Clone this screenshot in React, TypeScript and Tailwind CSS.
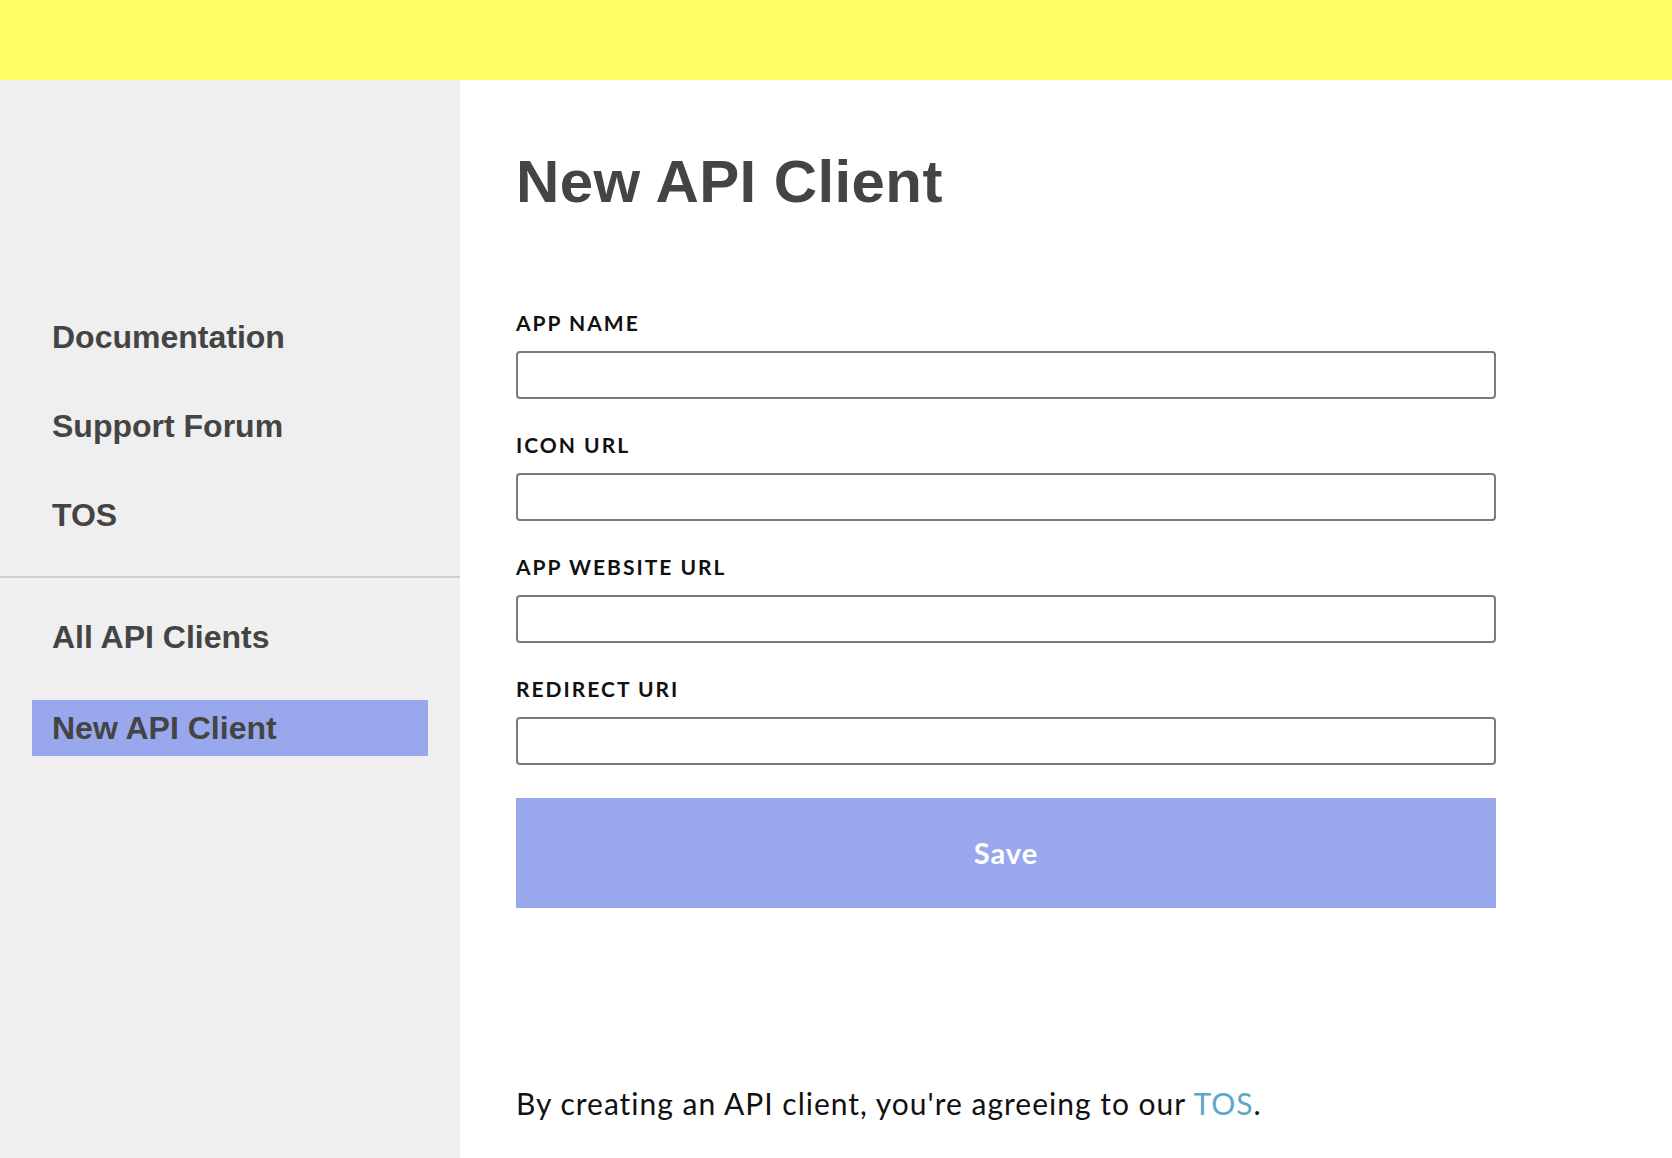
import { ReactNode } from 'react';

const sideItem = 'block px-5 text-[32px] leading-[40px] font-bold text-[#444]';

function Field({ label, last }: { label: string; last?: boolean }) {
  return (
    <div className={last ? '' : 'mb-[34px]'}>
      <label className="block text-[21px] leading-[24px] font-bold tracking-[2px] text-[#111] mb-4">{label}</label>
      <input type="text" className="block w-full h-[48px] border-2 border-[#7a7a7a] rounded-[4px] bg-white px-3 outline-none" />
    </div>
  );
}

function NavLink({ children, active }: { children: ReactNode; active?: boolean }) {
  return (
    <a href="#" className={active ? `${sideItem} py-2 bg-[#99a8ed]` : sideItem}>
      {children}
    </a>
  );
}

export default function App() {
  return (
    <div className="flex flex-col h-screen overflow-hidden bg-white" style={{ fontFamily: 'Lato, "Open Sans", sans-serif' }}>
      <header className="h-[80px] shrink-0 bg-[#ffff66]" />
      <div className="flex flex-1">
        <aside className="w-[460px] shrink-0 bg-[#efefef] pt-[237px] font-['Liberation_Sans',Arial,sans-serif]">
          <nav className="mx-8 flex flex-col gap-[49px]">
            <NavLink>Documentation</NavLink>
            <NavLink>Support Forum</NavLink>
            <NavLink>TOS</NavLink>
          </nav>
          <div className="mt-[41px] h-[2px] bg-[#d0d0d0]" />
          <nav className="mx-8 mt-[39px] flex flex-col gap-[43px]">
            <NavLink>All API Clients</NavLink>
            <NavLink active>New API Client</NavLink>
          </nav>
        </aside>
        <main className="flex-1 pl-[56px] pt-[66px]">
          <div className="w-[980px]">
            <h1 className="text-[60px] leading-[72px] font-bold tracking-[0.4px] text-[#444] font-['Liberation_Sans',Arial,sans-serif]">New API Client</h1>
            <form className="mt-[93px]" onSubmit={(e) => e.preventDefault()}>
              <Field label="APP NAME" />
              <Field label="ICON URL" />
              <Field label="APP WEBSITE URL" />
              <Field label="REDIRECT URI" last />
              <button type="submit" className="mt-[33px] w-full h-[110px] bg-[#99a8ed] text-white text-[29px] font-bold tracking-[1px]">
                Save
              </button>
            </form>
            <p className="mt-[178px] text-[30px] leading-[34px] tracking-[1px] text-[#111]">
              By creating an API client, you're agreeing to our <a href="#" className="text-[#5ba8c8]">TOS</a>.
            </p>
          </div>
        </main>
      </div>
    </div>
  );
}
